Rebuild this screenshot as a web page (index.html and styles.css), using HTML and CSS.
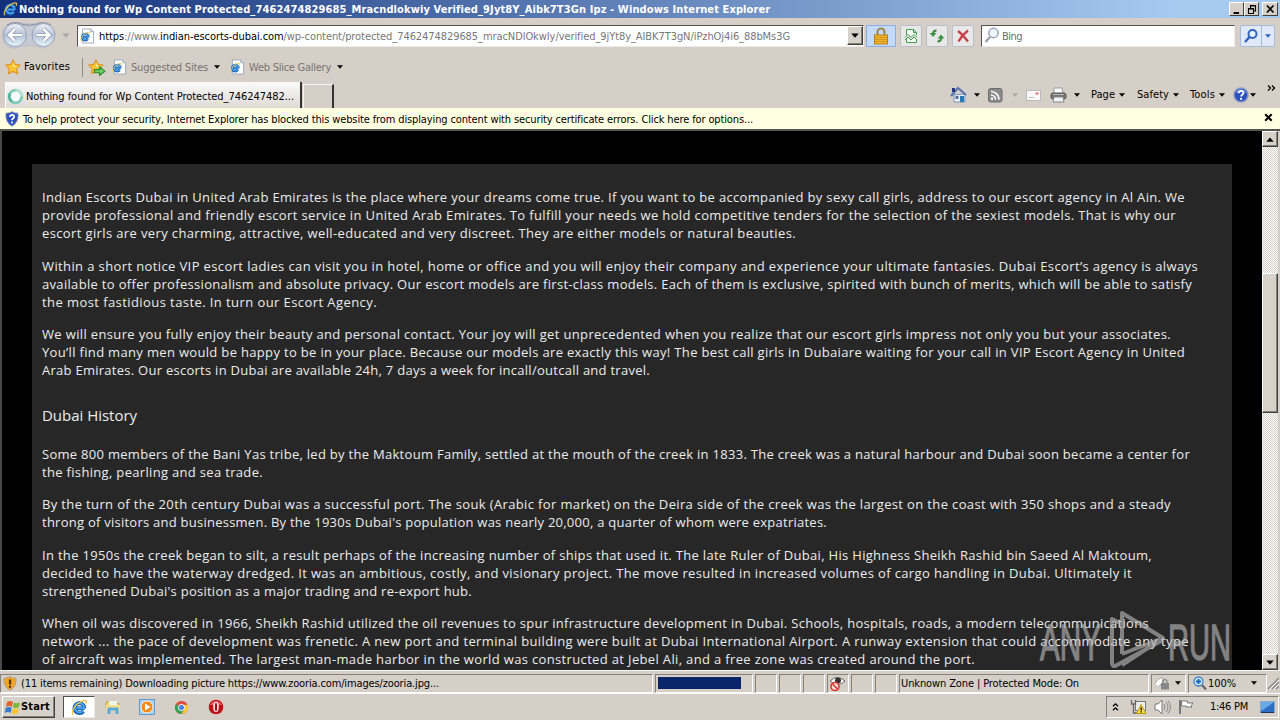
FILE: index.html
```html
<!DOCTYPE html>
<html lang="en">
<head>
<meta charset="utf-8">
<title>Windows Internet Explorer</title>
<link rel="stylesheet" href="styles.css">
</head>
<body>
<svg class="defs" width="0" height="0">
  <symbol id="ie" viewBox="0 0 16 16">
    <path d="M12.600 8.800H5.200M12.600 8.800a4.700 4.700 0 1 0-1 2.700" fill="none" stroke="#1554ae" stroke-width="3.600"/>
    <path d="M12.400 8.600H5.200M12.400 8.600a4.500 4.500 0 1 0-1 2.500" fill="none" stroke="#45a8ee" stroke-width="1.900"/>
    <path d="M2.300 14.600C-.6 12.600 3.700 5 10 2.200c3.700-1.700 5.500-.6 3.900 2.300" fill="none" stroke="#e8c33a" stroke-width="1.300"/>
  </symbol>
  <symbol id="iepage" viewBox="0 0 16 16">
    <path d="M2.500.5h9l3 3v12h-12z" fill="#fff" stroke="#9ba7b8"/>
    <path d="M11.500.5v3h3" fill="#dde5f0" stroke="#9ba7b8"/>
    <use href="#ie" x="0" y="3" width="11.500" height="11.500"/>
  </symbol>
  <symbol id="star" viewBox="0 0 16 16">
    <path d="M8 .8l2.200 4.700 5.200.6-3.800 3.600 1 5.200L8 12.400l-4.600 2.500 1-5.200L.6 6.100l5.200-.6z" fill="#fbc531" stroke="#d98a1c"/>
    <path d="M8 3l1.300 3.500 3 .4L8 8z" fill="#ffec9b"/>
  </symbol>
  <symbol id="help" viewBox="0 0 16 16">
    <circle cx="8" cy="8" r="7" fill="#2b50bd" stroke="#8a9cc9" stroke-width="1.500"/>
    <path d="M3 6a5.300 5.300 0 0 1 10 0q-5-2-10 0" fill="#7d9cec"/>
    <path d="M5.700 6.300c0-3 4.700-3 4.700-.3 0 1.700-2.300 1.700-2.300 3.500" fill="none" stroke="#fff" stroke-width="1.800"/>
    <circle cx="8.100" cy="11.900" r="1.100" fill="#fff"/>
  </symbol>
  <symbol id="tri" viewBox="0 0 6 4"><path d="M0 .3h6L3 3.700z" fill="currentColor"/></symbol>
</svg>

<header class="titlebar">
  <svg class="i15"><use href="#ie"/></svg>
  <span class="title" data-w="751">Nothing found for Wp Content Protected_7462474829685_Mracndlokwiy Verified_9Jyt8Y_Aibk7T3Gn Ipz - Windows Internet Explorer</span>
  <div class="winbtns">
    <svg width="16" height="14"><path d="M3.500 10h5.500" stroke="#000" stroke-width="2"/></svg>
    <svg width="16" height="14"><path d="M5.500 5V2.500h5V8H9M5 3h6M3.500 5.500H8.500v5H3.500zM3 6h6" fill="none" stroke="#000" stroke-width="1.100"/></svg>
    <svg class="apart" width="16" height="14"><path d="M4 2.500l6.500 7M10.500 2.500L4 9.500" stroke="#000" stroke-width="1.700"/></svg>
  </div>
</header>

<nav class="navrow">
  <svg class="backfwd" width="58" height="29" viewBox="0 0 58 29">
    <defs><linearGradient id="orb" x1="0" y1="0" x2="0" y2="1"><stop offset="0" stop-color="#eef1f6"/><stop offset=".5" stop-color="#b4c2d6"/><stop offset="1" stop-color="#e8f7fd"/></linearGradient></defs>
    <path d="M15 1.500Q29 4.500 43 1.500A13 13 0 0 1 43 27Q29 22 15 27.500A13 13 0 0 1 15 1.500" fill="#c5c9d1" stroke="#bfc0c8"/>
    <path d="M7 4Q15-.5 23 3.500 29 5 35.500 3.500 43.500-.5 51 4" fill="none" stroke="#858b9e"/>
    <circle cx="15" cy="14" r="11.500" fill="url(#orb)" stroke="#98a2b6"/>
    <circle cx="43.500" cy="14" r="11.500" fill="url(#orb)" stroke="#98a2b6"/>
    <path d="M22 14H9m6-6l-6 6 6 6M36.500 14h13m-6-6l6 6-6 6" fill="none" stroke="#8492ad" stroke-width="4"/>
    <path d="M22 14H9m6-6l-6 6 6 6M36.500 14h13m-6-6l6 6-6 6" fill="none" stroke="#fff" stroke-width="2.600"/>
  </svg>
  <svg class="tri pale"><use href="#tri"/></svg>
  <div class="address sunk">
    <svg class="i15"><use href="#iepage"/></svg>
    <span class="url" data-w="691"><b>https</b>://www.<b>indian-escorts-dubai.com</b>/wp-content/protected_7462474829685_mracNDlOkwIy/verified_9jYt8y_AIBK7T3gN/iPzhOj4i6_88bMs3G</span>
    <div class="combo raised"><svg class="tri"><use href="#tri"/></svg></div>
  </div>
  <div class="lock"><svg width="18" height="18" viewBox="0 0 18 18"><path d="M5.500 9V5a3.500 3.500 0 0 1 7 0V9" fill="none" stroke="#9c8a55" stroke-width="2.200"/><rect x="2.500" y="8" width="13" height="9" fill="#efb52c" stroke="#b97f15"/><path d="M3 10.500h12M3 12.500h12M3 14.500h12" stroke="#c98c18" stroke-width=".8"/></svg></div>
  <div class="tool"><svg width="16" height="16" viewBox="0 0 16 16"><path d="M3.500 7V1.500h7l3 3V7M3.500 11v3.500h10V11M10.500 1.500v3h3" fill="#f3fbf3" stroke="#469b52"/><path d="M2 9.500l3-3 3 3 3-3 3 3M2 12l3-3 3 3 3-3 3 3" fill="none" stroke="#469b52"/></svg></div>
  <div class="tool"><svg width="16" height="16" viewBox="0 0 16 16"><path d="M7.500 2.500Q4 2.500 4 6M8.500 13.500Q12 13.500 12 10" fill="none" stroke="#35863b" stroke-width="2"/><path d="M.5 5h7L4 9zM8.500 10.500h7L12 6.500z" fill="#3c9442"/></svg></div>
  <div class="tool"><svg width="16" height="16" viewBox="0 0 16 16"><path d="M3 3q4 3 10 10.500M13 2.500Q7 7 3.500 13.500" fill="none" stroke="#c64047" stroke-width="2.300"/></svg></div>
  <div class="search sunk">
    <svg width="16" height="17" viewBox="0 0 16 17"><circle cx="9.500" cy="6" r="4.700" fill="#edf4fb" stroke="#9aa6b8" stroke-width="1.500"/><path d="M6 10l-4.500 5" stroke="#9aa0aa" stroke-width="2.200"/></svg>
    <span data-w="20">Bing</span>
  </div>
  <div class="go">
    <div><svg width="16" height="16" viewBox="0 0 16 16"><circle cx="9.500" cy="6" r="4" fill="#e9f2ff" stroke="#2f63bd" stroke-width="2"/><path d="M6.500 9l-4.500 5" stroke="#2f63bd" stroke-width="2.400"/></svg></div>
    <div><svg class="tri small blue"><use href="#tri"/></svg></div>
  </div>
</nav>

<div class="favrow">
  <svg class="i16"><use href="#star"/></svg>
  <span class="favlabel" data-w="46">Favorites</span>
  <svg class="addfav" width="17" height="16" viewBox="0 0 17 16"><use href="#star" width="15" height="15"/><path d="M6 10h5V7.500l5 4-5 4V13H6z" fill="#6fd05f" stroke="#26892c"/></svg>
  <svg class="i15"><use href="#iepage"/></svg>
  <span class="link sug" data-w="77">Suggested Sites</span>
  <svg class="tri small"><use href="#tri"/></svg>
  <svg class="i15 slice"><use href="#iepage"/></svg>
  <span class="link" data-w="82">Web Slice Gallery</span>
  <svg class="tri small"><use href="#tri"/></svg>
</div>

<div class="tabrow">
  <div class="tab"><svg width="17" height="17" viewBox="0 0 17 17"><circle cx="8.500" cy="8.500" r="6.300" fill="#fff" stroke="#82cdb9" stroke-width="3"/><path d="M8.500 2.200a6.300 6.300 0 0 1 6.300 6.300" fill="none" stroke="#b6e2d6" stroke-width="3"/><path d="M3 5.500a6.300 6.300 0 0 0 2 8" fill="none" stroke="#52b298" stroke-width="2.500"/></svg><span data-w="268">Nothing found for Wp Content Protected_746247482...</span></div>
  <div class="newtab"></div>
  <div class="commands">
    <svg class="home" width="18" height="18" viewBox="0 0 18 18"><path d="M4 9v7h11V8z" fill="#edf3fb" stroke="#7891ba"/><path d="M1 10l7-8 8 7" fill="none" stroke="#5875b2" stroke-width="2.200"/><path d="M3.500 6V2" stroke="#26387d" stroke-width="3"/><path d="M10 10h4v6h-4z" fill="#267ab1"/><path d="M5.500 10h3v3h-3z" fill="#526a99"/></svg>
    <svg class="tri small g1"><use href="#tri"/></svg>
    <svg class="rss" width="15" height="15" viewBox="0 0 15 15"><rect x=".5" y=".5" width="13.500" height="13.500" rx="2" fill="#8b8b8b" stroke="#6c6c6c"/><path d="M3 3.500a8 8 0 0 1 8 8M3 7a4.500 4.500 0 0 1 4.500 4.500" fill="none" stroke="#fff" stroke-width="1.700"/><circle cx="4" cy="10.700" r="1.200" fill="#fff"/></svg>
    <svg class="tri small pale g2"><use href="#tri"/></svg>
    <svg class="mail" width="15" height="11"><rect x=".5" y=".5" width="14" height="10" fill="#f8f8f8" stroke="#bcbcbc"/><path d="M9.500 3.500h3" stroke="#db6b66" stroke-width="2"/><path d="M3 7.500h5" stroke="#bbb"/></svg>
    <svg class="print" width="17" height="16" viewBox="0 0 17 16"><path d="M4 6V1h8l1 5" fill="#fff" stroke="#999"/><rect x="1" y="6" width="15" height="6" rx="2" fill="#777" stroke="#555"/><path d="M4 10h9l1 5H3z" fill="#edf4f8" stroke="#888"/><path d="M3 7.500h11" stroke="#bbb"/></svg>
    <svg class="tri small g3"><use href="#tri"/></svg>
    <span class="c1" data-w="24">Page</span><svg class="tri small"><use href="#tri"/></svg>
    <span class="c2" data-w="32">Safety</span><svg class="tri small"><use href="#tri"/></svg>
    <span class="c3" data-w="25">Tools</span><svg class="tri small"><use href="#tri"/></svg>
    <svg class="i16 helpi"><use href="#help"/></svg><svg class="tri small"><use href="#tri"/></svg>
    <svg class="more" width="9" height="7"><path d="M1 .5l2.500 2.500L1 5.500M5 .5l2.500 2.500L5 5.500" fill="none" stroke="#000" stroke-width="1.300"/></svg>
  </div>
</div>

<div class="infobar">
  <svg width="14" height="16" viewBox="0 0 14 16"><path d="M7 .7q3 1.800 6 1.500 1 9-6 13Q0 11.200 1 2.200 4 2.500 7 .7" fill="#2b4fbd" stroke="#8793b8"/><path d="M5 6c0-3 4.200-2.700 4.200-.3C9.200 7.300 7 7.300 7 9.200" fill="none" stroke="#fff" stroke-width="1.700"/><circle cx="7" cy="11.500" r="1" fill="#fff"/></svg>
  <span data-w="730">To help protect your security, Internet Explorer has blocked this website from displaying content with security certificate errors. Click here for options...</span>
  <svg class="close" width="9" height="9"><path d="M1.200 1.200l6.500 6.500M7.700 1.200L1.200 7.700" stroke="#000" stroke-width="2"/></svg>
</div>

<div class="viewport">
  <main class="panel">
    <p><span data-w="1143">Indian Escorts Dubai in United Arab Emirates is the place where your dreams come true. If you want to be accompanied by sexy call girls, address to our escort agency in Al Ain. We</span><span data-w="1134">provide professional and friendly escort service in United Arab Emirates. To fulfill your needs we hold competitive tenders for the selection of the sexiest models. That is why our</span><span data-w="754">escort girls are very charming, attractive, well-educated and very discreet. They are either models or natural beauties.</span></p>
    <p><span data-w="1156">Within a short notice VIP escort ladies can visit you in hotel, home or office and you will enjoy their company and experience your ultimate fantasies. Dubai Escort’s agency is always</span><span data-w="1150">available to offer professionalism and absolute privacy. Our escort models are first-class models. Each of them is exclusive, spirited with bunch of merits, which will be able to satisfy</span><span data-w="335">the most fastidious taste. In turn our Escort Agency.</span></p>
    <p><span data-w="1129">We will ensure you fully enjoy their beauty and personal contact. Your joy will get unprecedented when you realize that our escort girls impress not only you but your associates.</span><span data-w="1143">You’ll find many men would be happy to be in your place. Because our models are exactly this way! The best call girls in Dubaiare waiting for your call in VIP Escort Agency in United</span><span data-w="608">Arab Emirates. Our escorts in Dubai are available 24h, 7 days a week for incall/outcall and travel.</span></p>
    <h2><span data-w="95">Dubai History</span></h2>
    <p><span data-w="1148">Some 800 members of the Bani Yas tribe, led by the Maktoum Family, settled at the mouth of the creek in 1833. The creek was a natural harbour and Dubai soon became a center for</span><span data-w="221">the fishing, pearling and sea trade.</span></p>
    <p><span data-w="1129">By the turn of the 20th century Dubai was a successful port. The souk (Arabic for market) on the Deira side of the creek was the largest on the coast with 350 shops and a steady</span><span data-w="785">throng of visitors and businessmen. By the 1930s Dubai's population was nearly 20,000, a quarter of whom were expatriates.</span></p>
    <p><span data-w="1110">In the 1950s the creek began to silt, a result perhaps of the increasing number of ships that used it. The late Ruler of Dubai, His Highness Sheikh Rashid bin Saeed Al Maktoum,</span><span data-w="1090">decided to have the waterway dredged. It was an ambitious, costly, and visionary project. The move resulted in increased volumes of cargo handling in Dubai. Ultimately it</span><span data-w="430">strengthened Dubai's position as a major trading and re-export hub.</span></p>
    <p><span data-w="1107">When oil was discovered in 1966, Sheikh Rashid utilized the oil revenues to spur infrastructure development in Dubai. Schools, hospitals, roads, a modern telecommunications</span><span data-w="1147">network ... the pace of development was frenetic. A new port and terminal building were built at Dubai International Airport. A runway extension that could accommodate any type</span><span data-w="933">of aircraft was implemented. The largest man-made harbor in the world was constructed at Jebel Ali, and a free zone was created around the port.</span></p>
  </main>
  <div class="scroll">
    <div class="arrow raised"><svg class="tri up"><use href="#tri"/></svg></div>
    <div class="thumb raised"></div>
    <div class="arrow raised bottom"><svg class="tri"><use href="#tri"/></svg></div>
  </div>
  <svg class="mark" width="200" height="64" viewBox="0 0 200 64">
    <g fill="#b4b4b4" stroke="#b4b4b4" stroke-width="1.300"><text x="2" y="50" font-size="50" textLength="61" lengthAdjust="spacingAndGlyphs">ANY</text><text x="130" y="50" font-size="50" textLength="63" lengthAdjust="spacingAndGlyphs">RUN</text></g>
    <path d="M84 44V3l41 25-41 27M84 14L74 9v43q0 6 5 3l46-25M84 44l41-16" fill="none" stroke="#b4b4b4" stroke-width="4" stroke-linejoin="round"/>
  </svg>
</div>

<footer class="status">
  <div class="cell s1"><svg width="14" height="15" viewBox="0 0 14 15"><path d="M7 .7q3 1.500 6 1.500 1 8-6 12Q0 10.200 1 2.200 4 2.200 7 .7" fill="#f3a522" stroke="#a9a18e"/><path d="M7 3.500v5" stroke="#542d0d" stroke-width="2.200"/><circle cx="7" cy="10.800" r="1.200" fill="#542d0d"/></svg><span data-w="418">(11 items remaining) Downloading picture https://www.zooria.com/images/zooria.jpg...</span></div>
  <div class="cell s2"><div class="progress"></div></div>
  <div class="cell sm"></div><div class="cell sm"></div><div class="cell sm"></div>
  <div class="cell sm"><svg width="19" height="17" viewBox="0 0 19 17"><path d="M2 6q7-7 15 0-7 7-15 0" fill="#fff" stroke="#666"/><circle cx="10" cy="5.500" r="3" fill="#333"/><circle cx="7" cy="11.500" r="4" fill="#f5dada" stroke="#d73b36" stroke-width="1.600"/><path d="M4.500 9l5 5" stroke="#d73b36" stroke-width="1.600"/></svg></div>
  <div class="cell sm"></div><div class="cell sm"></div>
  <div class="cell s3"><span data-w="178">Unknown Zone | Protected Mode: On</span></div>
  <div class="cell s4"><svg width="16" height="15" viewBox="0 0 16 15"><path d="M1 8q3-7 8-6l-1 5-3 3" fill="#fff" stroke="#aaa"/><rect x="7" y="7" width="8" height="6.500" fill="#888"/><path d="M9 7V5q2-3 4 0v2" fill="none" stroke="#888" stroke-width="1.300"/></svg><svg class="tri small"><use href="#tri"/></svg></div>
  <div class="cell s5"><svg width="14" height="15" viewBox="0 0 14 15"><circle cx="5.500" cy="5.500" r="4.500" fill="#c9e6ff" stroke="#4184c6" stroke-width="1.300"/><path d="M5.500 3v5M3 5.500h5" stroke="#1764b7" stroke-width="1.800"/><path d="M9 9l4 4.500" stroke="#666" stroke-width="2.200"/></svg><span data-w="28">100%</span><svg class="tri small"><use href="#tri"/></svg></div>
  <svg class="grip" width="12" height="14"><path d="M1 13L12 2M5 13l7-7M9 13l3-3" stroke="#888" stroke-width="1.500"/><path d="M2.500 13.500L12 4M6.500 13.500L12 8" stroke="#fff"/></svg>
</footer>

<div class="taskbar">
  <div class="start raised"><svg width="17" height="15" viewBox="0 0 17 15"><path d="M3 2q3-2 6 0L8 7Q5 5 2 7z" fill="#e4632e"/><path d="M10 2.500q3 1.500 6-.3L15 7q-3 2-6 .4z" fill="#79b83d"/><path d="M1.700 8q3-2 6 0l-1 5Q4 11 .7 13z" fill="#3779ce"/><path d="M8.700 8.400q3 1.500 6-.3l-1 5q-3 2-6 .3z" fill="#f7c532"/></svg><span data-w="29">Start</span></div>
  <div class="active sunk"><svg width="17" height="17"><use href="#ie"/></svg></div>
  <svg class="t1" width="16" height="16" viewBox="0 0 16 16"><path d="M1 3h5l1 1.500h7V9H1z" fill="#f3d46c" stroke="#c9a643"/><path d="M4 2h8v4H4z" fill="#eaf6e8"/><path d="M1 6h14v6H1z" fill="#f7df8b"/><path d="M4 15v-5h8v5" fill="none" stroke="#59abd9" stroke-width="3"/></svg>
  <svg class="t2" width="17" height="17"><rect x=".5" y=".5" width="15" height="15" fill="#a9d1f1" stroke="#5b9ad1"/><circle cx="8" cy="8" r="6" fill="#f28a1c" stroke="#fff" stroke-width=".8"/><path d="M6 4.500L11.500 8 6 11.500z" fill="#fff"/></svg>
  <svg class="t3" width="15" height="15" viewBox="0 0 16 16"><circle cx="8" cy="8" r="7" fill="#e04a3d"/><path d="M8 8L2 4.500A7 7 0 0 0 8 15l3-5z" fill="#36a256"/><path d="M8 15l3.500-6L10 5h4.500A7 7 0 0 1 8 15" fill="#f9cd3c"/><circle cx="8" cy="8" r="3.300" fill="#4a82e4" stroke="#fff"/></svg>
  <svg class="t4" width="16" height="16"><circle cx="8" cy="8" r="7.300" fill="#bd1117"/><path d="M2 6a6.500 6.500 0 0 1 12 0" fill="#e65a5b"/><ellipse cx="8" cy="8" rx="2.700" ry="5" fill="#fff"/><ellipse cx="8" cy="8" rx="1.200" ry="4.300" fill="#a70c13"/></svg>
  <div class="tray">
    <svg width="7" height="10"><path d="M1 4.300L3.500 1.800 6 4.300M1 8.300l2.500-2.500L6 8.300" fill="none" stroke="#000" stroke-width="1.300"/></svg>
    <svg class="y1" width="17" height="16" viewBox="0 0 17 16"><rect x="5.500" y="2.500" width="10" height="9" fill="#eee" stroke="#777"/><path d="M1.500 1v4h4V1M3.500 5v9h5" fill="none" stroke="#666" stroke-width="1.300"/><path d="M11 5.500l5 9H6.500z" fill="#ffe13d" stroke="#b59a18"/><path d="M11.200 8.500v3M11.200 12.300v1.200" stroke="#000" stroke-width="1.300"/></svg>
    <svg class="y2" width="17" height="16" viewBox="0 0 17 16"><path d="M1 5h3l4-4v14l-4-4H1z" fill="#fff" stroke="#777"/><path d="M10 5q2 3 0 6M12 3q4 5 0 10M14 1.500q5 6.500 0 13" fill="none" stroke="#888"/></svg>
    <svg class="y3" width="17" height="16" viewBox="0 0 17 16"><path d="M2 1v14" stroke="#777" stroke-width="2"/><path d="M3.500 2h6v2H15l-2 3 1 1H8.500V7h-5z" fill="#fff" stroke="#777"/></svg>
    <span data-w="38">1:46 PM</span>
    <svg class="y4" width="15" height="13"><rect x=".5" y=".5" width="14" height="11" fill="#2d6fc4" stroke="#8da6c4"/><path d="M1 1h13L3 9H1z" fill="#69a9e8"/><path d="M1 11.500h13" stroke="#1d355f"/></svg>
  </div>
</div>
<script src="fit.js"></script>
</body>
</html>
```

FILE: styles.css
```css
* { box-sizing: border-box; }
body { margin: 0; width: 1280px; height: 720px; overflow: hidden; display: flex; flex-direction: column; background: #d6cfc8; color: #000; font: 11px/14px "DejaVu Sans Condensed", "DejaVu Sans", sans-serif; font-stretch: condensed; }
svg { flex: none; display: block; }
.defs { position: absolute; }
[data-w] { white-space: pre; flex: none; }
.i15 { width: 15px; height: 16px; }
.i16 { width: 16px; height: 16px; }
.tri { width: 8px; height: 5px; }
.tri.small { width: 6px; height: 4px; }
.pale { color: #aca8a1; }
.blue { color: #2f63bd; }
.up { transform: rotate(180deg); }
.raised { background: #d6d2ca; border: 1px solid; border-color: #fff #404040 #404040 #fff; box-shadow: inset -1px -1px #858078; }
.sunk { background: #fff; border: 1px solid; border-color: #55524e #eeece8 #eeece8 #55524e; }

.titlebar { height: 18px; flex: none; display: flex; align-items: center; padding: 0 2px 0 3px; background: linear-gradient(90deg, #12307a, #a6caf0 92%); color: #fff; }
.title { margin: 1px 0 0 1px; font-weight: bold; }
.winbtns { display: flex; margin-left: auto; }
.winbtns svg { width: 15px; height: 14px; background: #d6d0c8; border: 1px solid; border-color: #fff #404040 #404040 #fff; }
.winbtns .apart { margin-left: 3px; width: 16px; }

.navrow { height: 34px; flex: none; display: flex; align-items: center; padding-top: 1px; }
.navrow > .tri { margin: 0 7px 0 4px; }
.address { width: 787px; height: 22px; display: flex; align-items: center; padding: 1px 0 0 2px; }
.url { margin-left: 4px; padding-top: 1px; color: #777; }
.url b { font-weight: normal; color: #000; }
.combo { width: 16px; height: 19px; margin: -1px 0 0 auto; display: flex; align-items: center; justify-content: center; }
.lock { width: 30px; height: 22px; margin-left: 2px; display: flex; align-items: center; justify-content: center; background: #c5daf8; border: 1px solid #86aee8; }
.tool { width: 22px; height: 22px; margin-left: 4px; display: flex; align-items: center; justify-content: center; background: #e9e8e8; border: 1px solid #bbbec7; border-radius: 2px; }
.search { width: 254px; height: 22px; margin-left: 7px; display: flex; align-items: center; padding-left: 2px; color: #6d6d6d; }
.search span { margin: 2px 0 0 2px; }
.go { width: 35px; height: 22px; margin-left: 5px; display: flex; background: #dfe9f8; border: 1px solid #a9bad7; border-radius: 2px; }
.go div { width: 20px; display: flex; align-items: center; justify-content: center; }
.go div + div { width: 13px; border-left: 1px solid #a9bad7; }

.favrow { height: 30px; flex: none; display: flex; align-items: center; padding-left: 5px; }
.favlabel { margin: 0 12px 0 3px; }
.favrow .addfav { width: 24px; height: 19px; padding-left: 5px; margin-right: 6px; border-left: 1px solid #8e8982; }
.link { margin: 1px 6px 0 4px; color: #77736e; }
.slice { margin-left: 10px; }

.tabrow { height: 26px; flex: none; display: flex; align-items: flex-end; padding-left: 5px; }
.tab { width: 297px; height: 26px; display: flex; align-items: center; padding: 2px 0 0 1px; background: linear-gradient(#fbfaf9, #dedad6); border-right: 2px solid #36332f; border-left: 1px solid #fff; }
.tab span { margin: 1px 0 0 2px; }
.newtab { width: 31px; height: 24px; margin-left: 1px; border: 1px solid #f7f5f2; border-bottom: 0; border-right: 2px solid #36332f; }
.commands { height: 26px; display: flex; align-items: center; margin-left: 616px; }
.g1 { margin: 0 8px 0 6px; }
.g2 { margin: 0 8px 0 9px; }
.print { margin-left: 9px; }
.g3 { margin: 0 11px 0 7px; }
.commands span { margin-right: 4px; }
.c2, .c3 { margin-left: 12px; }
.c3 { margin-left: 11px; }
.helpi { margin: 0 1px 0 8px; }
.more { margin: -13px 0 0 11px; }

.infobar { height: 21px; flex: none; display: flex; align-items: center; padding: 1px 7px 0 5px; background: #ffffe1; }
.infobar span { margin: 1px 0 0 4px; }
.close { margin-left: auto; margin-top: -3px; }

.viewport { position: relative; height: 541px; flex: none; display: flex; justify-content: space-between; background: #000; border-top: 2px solid #55564f; border-left: 2px solid #494b49; overflow: hidden; }
.panel { width: 1200px; height: 510px; margin: 33px 0 0 30px; padding: 24px 10px 0; background: #272727; color: #ececec; font: 13px/18px "Open Sans", "Noto Sans", sans-serif; overflow: hidden; }
.panel p { margin: 0 0 14.5px; }
.panel p span { display: block; width: max-content; }
.panel h2 { margin: 26px 0 19.5px; font-size: 15px; line-height: 20px; font-weight: normal; }
.scroll { width: 18px; display: flex; flex-direction: column; padding-right: 2px; background-color: #fff; background-image: conic-gradient(#d6cfc8 25%, #fff 0 50%, #d6cfc8 0 75%, #fff 0); background-size: 2px 2px; border-right: 2px solid #d6cfc8; }
.arrow { height: 16px; flex: none; display: flex; align-items: center; justify-content: center; }
.scroll .raised { width: 16px; }
.thumb { height: 140px; margin-top: 126px; }
.bottom { margin-top: auto; }
.mark { position: absolute; left: 1036px; top: 479px; opacity: .65; font-family: "Liberation Sans", sans-serif; }

.status { height: 24px; flex: none; display: flex; align-items: center; padding-top: 2px; gap: 2px; border-top: 1px solid #f7f5f2; border-bottom: 1px solid #fff; }
.cell { height: 19px; flex: none; display: flex; align-items: center; border: 1px solid; border-color: #85817b #fff #fff #85817b; }
.cell span { padding-top: 1px; }
.s1 { width: 653px; padding-left: 2px; }
.s1 span { margin-left: 4px; }
.s2 { width: 98px; padding: 2px; }
.progress { width: 83px; height: 12px; background: #0a246a; }
.sm { width: 22px; }
.s3 { width: 250px; }
.s3 span { margin-left: 1px; }
.s4 { width: 35px; padding-left: 2px; gap: 5px; }
.s5 { width: 79px; padding-left: 4px; }
.s5 span { margin-left: 1px; }
.s5 .tri { margin-left: 15px; }
.grip { margin-left: -2px; }

.taskbar { height: 26px; flex: none; display: flex; align-items: center; padding: 0 1px; }
.start { width: 53px; height: 22px; margin-left: 1px; display: flex; align-items: center; padding-left: 1px; font-weight: bold; }
.active { width: 32px; height: 22px; margin: 0 10px 0 8px; display: flex; align-items: center; justify-content: center; }
.t2 { margin-left: 18px; }
.t3 { margin-left: 18px; }
.t4 { margin-left: 19px; }
.tray { width: 173px; height: 22px; margin-left: auto; display: flex; align-items: center; padding-left: 5px; border: 1px solid; border-color: #85817b #fff #fff #85817b; }
.y1 { margin-left: 11px; }
.y2, .y3 { margin-left: 7px; }
.tray span { margin-left: 15px; }
.y4 { margin-left: 12px; }
```

FILE: fit.js
```js
// Tracks each label so that it spans the width given in data-w.
document.querySelectorAll('[data-w]').forEach(function (el) {
  var range = document.createRange();
  range.selectNodeContents(el);
  var natural = range.getBoundingClientRect().width;
  el.style.letterSpacing = (el.dataset.w - natural) / el.textContent.length + 'px';
});
```
